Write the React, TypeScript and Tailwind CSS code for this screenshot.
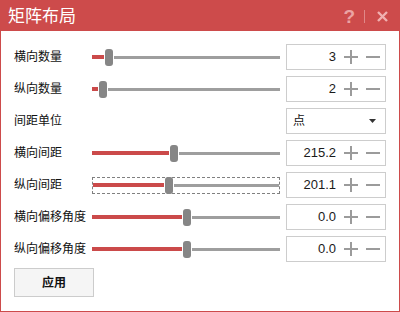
import { useState } from 'react';

type Row =
  | { kind: 'slider'; label: string; fill: number; value: string; focused?: boolean }
  | { kind: 'select'; label: string; value: string };

const rows: Row[] = [
  { kind: 'slider', label: '横向数量', fill: 12, value: '3' },
  { kind: 'slider', label: '纵向数量', fill: 6, value: '2' },
  { kind: 'select', label: '间距单位', value: '点' },
  { kind: 'slider', label: '横向间距', fill: 77, value: '215.2' },
  { kind: 'slider', label: '纵向间距', fill: 72, value: '201.1', focused: true },
  { kind: 'slider', label: '横向偏移角度', fill: 90, value: '0.0' },
  { kind: 'slider', label: '纵向偏移角度', fill: 90, value: '0.0' },
];

function Slider({ fill, focused }: { fill: number; focused?: boolean }) {
  return (
    <div
      className={`flex items-center w-[188px] h-[17px] ${
        focused ? 'border border-dashed border-[#808080]' : ''
      }`}
    >
      <div className="h-[4px] bg-[#cb4a4a]" style={{ width: focused ? fill - 1 : fill }} />
      <div className="ml-px w-2 h-[17px] rounded-[3px] bg-[#868686]" />
      <div className="ml-px flex-1 h-[3px] bg-[#9e9e9e]" />
    </div>
  );
}

function Stepper({ value }: { value: string }) {
  return (
    <div className="ml-[6px] w-[100px] h-[26px] border border-[#cdcdcd] flex items-center pr-[5px] gap-2">
      <span className="flex-1 text-right text-[13px] text-[#1a1a1a]">{value}</span>
      <svg width="14" height="14" viewBox="0 0 14 14">
        <path d="M0 7h14M7 0v14" stroke="#9b9b9b" strokeWidth="2" />
      </svg>
      <svg width="14" height="14" viewBox="0 0 14 14">
        <path d="M0 7h14" stroke="#9b9b9b" strokeWidth="2" />
      </svg>
    </div>
  );
}

export default function App() {
  const [unit] = useState('点');

  return (
    <div
      className="w-[400px] h-[312px] bg-white border border-[#cd4b4b] flex flex-col"
      style={{ fontFamily: '"Liberation Sans", "Noto Sans CJK SC", sans-serif' }}
    >
      {/* title bar */}
      <div className="h-[30px] bg-[#cd4b4b] flex items-center pl-[7px] pr-[11px]">
        <span className="text-white text-[17px] leading-none flex-1">矩阵布局</span>
        <span className="text-[#eba3a3] text-[19px] font-bold leading-none">?</span>
        <div className="mx-[9px] w-px h-[13px] bg-[#e08888]" />
        <svg width="11" height="11" viewBox="0 0 11 11" className="ml-[3px]">
          <path d="M1 1l9 9M10 1l-9 9" stroke="#f0b0b0" strokeWidth="2.4" />
        </svg>
      </div>

      <div className="flex flex-col px-[13px] pt-[10px]">
        {rows.map((row) => (
          <div key={row.label} className="h-8 flex items-center">
            <span className="w-[78px] text-[12px] text-[#111]">{row.label}</span>
            {row.kind === 'slider' ? (
              <>
                <Slider fill={row.fill} focused={row.focused} />
                <Stepper value={row.value} />
              </>
            ) : (
              <>
                <div className="w-[188px]" />
                <div className="ml-[6px] w-[100px] h-[26px] border border-[#cdcdcd] flex items-center pl-[6px] pr-[9px]">
                  <span className="flex-1 text-[12px] text-[#111]">{unit}</span>
                  <svg width="7" height="4" viewBox="0 0 7 4">
                    <path d="M0 0h7L3.5 4z" fill="#333" />
                  </svg>
                </div>
              </>
            )}
          </div>
        ))}

        <button className="mt-[3px] w-[80px] h-[29px] bg-[#f5f5f5] border border-[#cccccc] text-[12px] font-bold text-[#111]">
          应用
        </button>
      </div>
    </div>
  );
}
